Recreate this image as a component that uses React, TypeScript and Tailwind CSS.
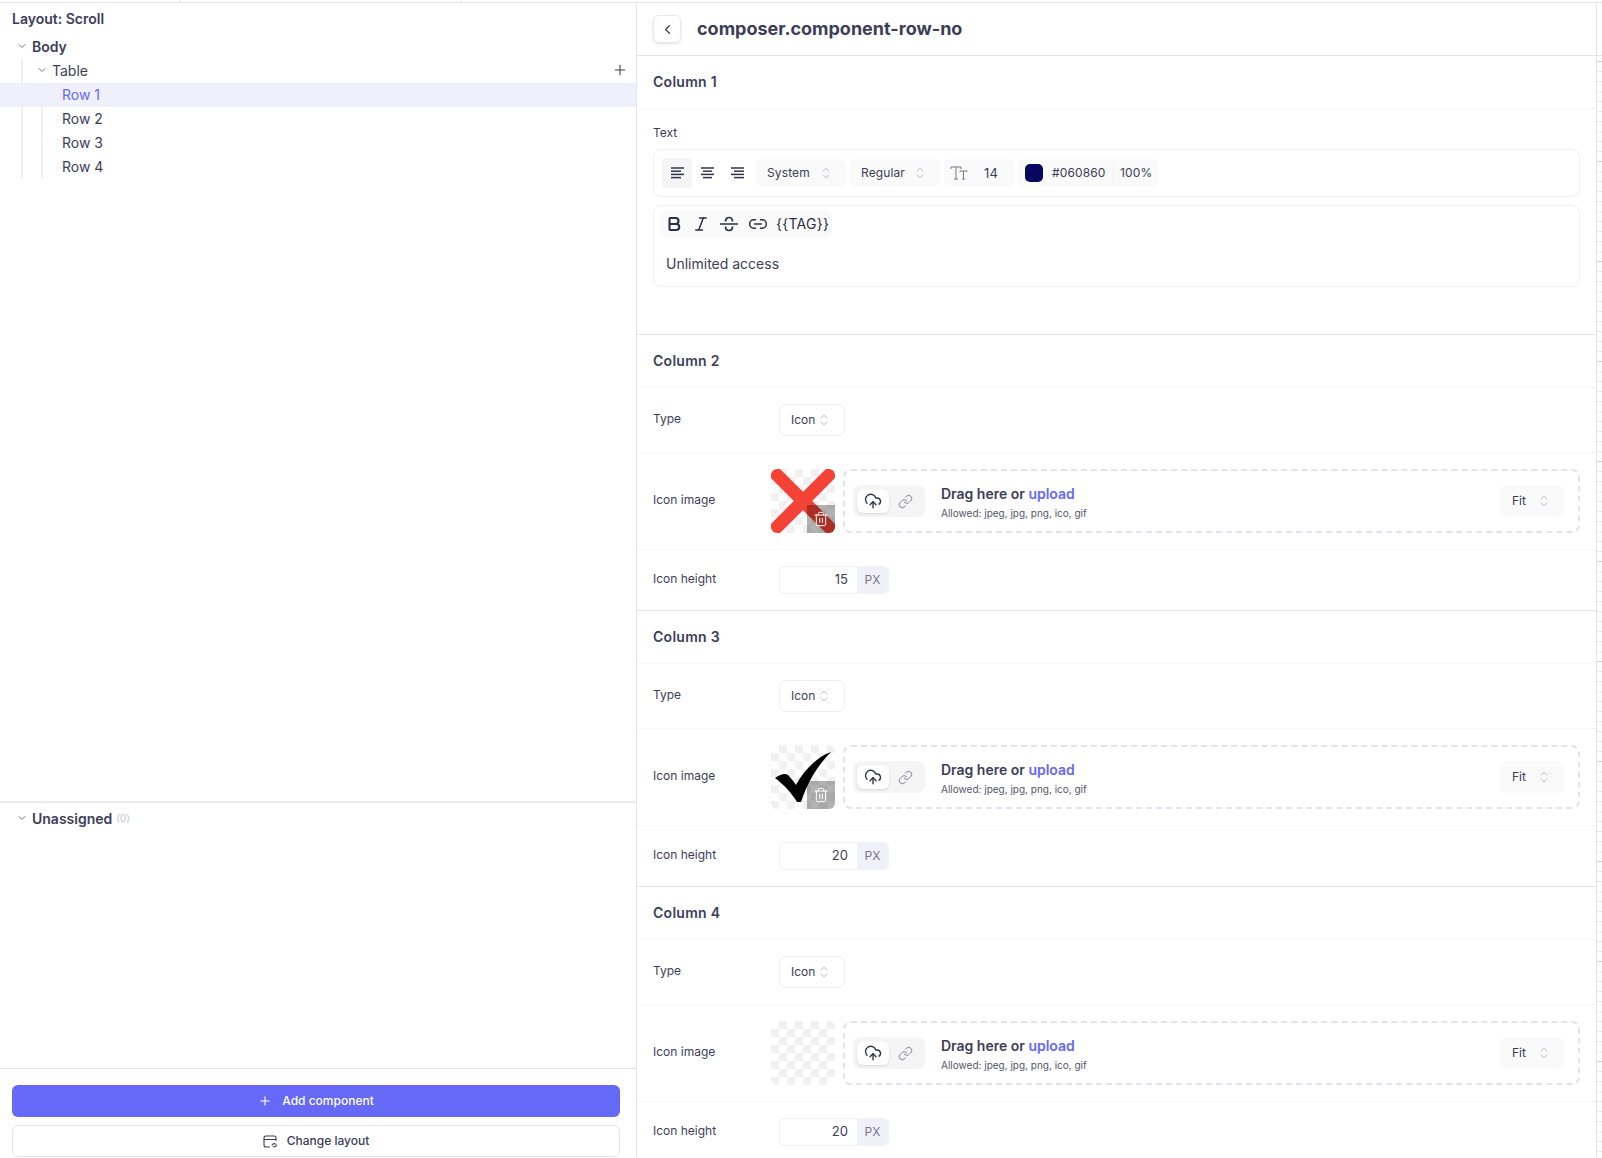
import React from "react";
import { ChevronDown, ChevronLeft, Plus, Bold, Italic, Link2, CloudUpload, Link, Trash2 } from "lucide-react";

const AlignIcon = ({ kind }: { kind: "l" | "c" | "r" }) => {
  const rows = kind === "l" ? [[1, 14], [1, 11], [1, 14], [1, 11]] : kind === "c" ? [[1, 14], [3, 12], [1, 14], [3, 12]] : [[1, 14], [4, 14], [1, 14], [4, 14]];
  return (
    <svg width="15" height="12" viewBox="0 0 15 12" stroke="#33334a" strokeWidth="1.5">
      {rows.map((r, i) => (
        <line key={i} x1={r[0]} x2={r[1]} y1={1 + i * 3.2} y2={1 + i * 3.2} />
      ))}
    </svg>
  );
};

const Updown = ({ className = "" }: { className?: string }) => (
  <svg width="8" height="12" viewBox="0 0 8 12" fill="none" stroke="#b9b9c6" strokeWidth="1" className={className}>
    <path d="M1 4.2 4 1.2l3 3M1 7.8l3 3 3-3" />
  </svg>
);

function Section({ title, height, file }: { title: string; height: string; file: "x" | "check" | "none" }) {
  return (
    <section className="border-t border-[#e5e5e8]">
      <div className="h-[53px] flex items-center px-4 border-b border-[#f7f7f9]">
        <h3 className="mb-[2px] text-[14px] tracking-[0.02em] font-semibold text-[#3d3d58]">{title}</h3>
      </div>
      <div className="h-[65px] flex items-center px-4 border-b border-[#f7f7f9]">
        <span className="mb-[2px] w-[126px] text-[12px] text-[#3d3d58]">Type</span>
        <div className="w-[66px] h-[32px] rounded-md border border-[#eeeef6] flex items-center pl-[11px] gap-[5px] text-[12px] text-[#3d3d58]">
          Icon <Updown />
        </div>
      </div>
      <div className="h-[97px] flex items-center pl-4 pr-4 border-b border-[#f7f7f9]">
        <span className="mb-[2px] w-[118px] text-[12px] text-[#3d3d58]">Icon image</span>
        <div className="relative w-[64px] h-[64px] rounded-md overflow-hidden bg-[repeating-conic-gradient(#f1f1f1_0_25%,#ffffff_0_50%)] bg-[length:16px_16px]">
          {file === "x" && (
            <svg viewBox="0 0 64 64" className="absolute inset-0 w-full h-full">
              <path d="M6 6 58 58M58 6 6 58" stroke="#f44336" strokeWidth="13" strokeLinecap="round" />
            </svg>
          )}
          {file === "check" && (
            <svg viewBox="0 0 64 64" className="absolute inset-0 w-full h-full">
              <path d="M4 33 C10 29 14 28 17 30 C20 33 23 37 25 40 C33 25 46 12 60 7 C47 20 37 36 30 57 L26 57 C20 47 12 39 4 33Z" fill="#000" />
            </svg>
          )}
          {file !== "none" && (
            <div className="absolute right-0 bottom-0 w-[28px] h-[28px] bg-black/30 flex items-center justify-center">
              <Trash2 size={16} strokeWidth={1.5} className="text-white" />
            </div>
          )}
        </div>
        <div className="ml-2 flex-1 h-[64px] rounded-lg border-2 border-dashed border-[#e3e3f0] flex items-center pl-[8px] pr-[14px]">
          <div className="w-[72px] h-[32px] rounded-lg bg-[#f5f5f5] flex items-center pl-1">
            <div className="w-[32px] h-[24px] rounded-md bg-white shadow-sm flex items-center justify-center">
              <CloudUpload size={18} strokeWidth={1.8} className="text-[#2f2f45]" />
            </div>
            <Link size={15} strokeWidth={1.5} className="ml-[9px] text-[#77778a]" />
          </div>
          <div className="ml-4 flex-1 pt-1">
            <div className="text-[14px] leading-[20px] font-semibold text-[#3d3d58]">
              Drag here or <span className="text-[#6569f5]">upload</span>
            </div>
            <div className="text-[10px] leading-[18px] text-[#55556a]">Allowed: jpeg, jpg, png, ico, gif</div>
          </div>
          <div className="w-[64px] h-[32px] rounded-md bg-[#fafafa] flex items-center pl-3 gap-[14px] text-[12px] text-[#3d3d58]">
            Fit <Updown />
          </div>
        </div>
      </div>
      <div className="h-[60px] flex items-center px-4">
        <span className="mb-[2px] w-[126px] text-[12px] text-[#3d3d58]">Icon height</span>
        <div className="flex h-[28px] w-[110px] rounded-md border border-[#f0f0f6] overflow-hidden">
          <div className="flex-1 flex items-center justify-end pr-[9px] text-[13px] text-[#3d3d58]">{height}</div>
          <div className="w-[31px] bg-[#f0f0f9] flex items-center justify-center text-[12px] text-[#77778c]">PX</div>
        </div>
      </div>
    </section>
  );
}

const Row = ({ label, active }: { label: string; active?: boolean }) => (
  <div className={`h-[24px] flex items-center pl-[62px] pb-[2px] text-[14px] ${active ? "bg-[#f0f0fd] text-[#6569f5]" : "text-[#3d3d58]"}`}>{label}</div>
);

const Pill = ({ className, children }: { className: string; children: React.ReactNode }) => (
  <div className={`h-[28px] rounded-md bg-[#fafafa] flex items-center text-[12px] tracking-[0.01em] text-[#3d3d58] ${className}`}>{children}</div>
);

export default function App() {
  return (
    <div className="h-[1158px] w-[1602px] overflow-hidden bg-white flex flex-col font-['Inter',sans-serif]">
      <div className="h-[3px] border-b border-[#e5e5e5] flex shrink-0">
        <div className="w-[181px] border-r border-[#e5e5e5]" />
        <div className="w-[281px] border-r border-[#e5e5e5]" />
      </div>
      <div className="flex flex-1 min-h-0">
        <aside className="w-[637px] border-r border-[#e5e5e8] flex flex-col">
          <div className="h-[32px] flex items-center pl-3 pb-[2px] text-[14px] font-semibold text-[#3d3d58]">Layout: Scroll</div>
          <div className="h-[766px] relative">
            <div className="h-[24px] flex items-center pl-4 pb-[2px] gap-[4px] text-[14px] font-semibold text-[#3d3d58]">
              <ChevronDown size={12} className="text-[#77778a]" />
              Body
            </div>
            <div className="h-[24px] flex items-center pl-[36px] pr-[8px] pb-[2px] gap-[4px] text-[14px] text-[#3d3d58]">
              <ChevronDown size={12} className="text-[#77778a]" />
              <span className="flex-1">Table</span>
              <Plus size={16} strokeWidth={1.6} className="text-[#3d3d58]" />
            </div>
            <Row label="Row 1" active />
            <Row label="Row 2" />
            <Row label="Row 3" />
            <Row label="Row 4" />
            <div className="absolute left-[21px] top-[24px] w-[2px] h-[120px] bg-[#f0f0f3]" />
            <div className="absolute left-[41px] top-[48px] w-[2px] h-[96px] bg-[#f0f0f3]" />
          </div>
          <div className="flex-1 border-t-2 border-[#ececef]">
            <div className="h-[30px] flex items-center pl-4 gap-[4px] text-[14px] font-semibold text-[#3d3d58]">
              <ChevronDown size={12} className="text-[#77778a]" />
              Unassigned <span className="text-[10px] font-normal text-[#c3c3d2]">(0)</span>
            </div>
          </div>
          <div className="h-[90px] border-t border-[#e5e5e8] pl-3 pr-4 pt-4 flex flex-col gap-2">
            <button className="h-[32px] shrink-0 rounded-md bg-[#6569f5] text-white text-[12px] font-medium flex items-center justify-center gap-[10px]">
              <Plus size={14} /> Add component
            </button>
            <button className="h-[32px] shrink-0 rounded-md border border-[#e5e5e8] text-[#3d3d58] text-[12px] font-medium flex items-center justify-center gap-[9px]">
              <svg width="15" height="13" viewBox="0 0 15 13" fill="none" stroke="#3d3d58" strokeWidth="1.1">
                <path d="M7 12H3a2 2 0 0 1-2-2V3a2 2 0 0 1 2-2h8a2 2 0 0 1 2 2v3M1 4.5h12" />
                <path d="M9 10.5a2 2 0 0 1 3.6-1M13.5 9.5a2 2 0 0 1-3.5 1.5" />
              </svg>
              Change layout
            </button>
          </div>
        </aside>
        <main className="flex-1 min-w-0 flex flex-col">
          <header className="h-[53px] shrink-0 flex items-center pl-4 gap-4 border-b border-[#e5e5e8]">
            <button className="w-[28px] h-[28px] rounded-md border border-[#e8e8ee] shadow-sm flex items-center justify-center">
              <ChevronLeft size={15} className="text-[#3d3d58]" />
            </button>
            <h1 className="mb-[2px] text-[18px] font-bold text-[#3d3d58]">composer.component-row-no</h1>
          </header>
          <section className="h-[278px] shrink-0">
            <div className="h-[53px] flex items-center px-4 border-b border-[#f7f7f9]">
              <h3 className="mb-[2px] text-[14px] tracking-[0.02em] font-semibold text-[#3d3d58]">Column 1</h3>
            </div>
            <div className="pl-4 pr-4">
              <div className="h-[40px] pt-[7px] flex items-center text-[12px] text-[#3d3d58]">Text</div>
              <div className="h-[48px] rounded-lg border border-[#f0f0f6] flex items-center pl-[8px] gap-1">
                <div className="flex">
                  <div className="w-[30px] h-[30px] bg-[#f5f5f5] rounded flex items-center justify-center"><AlignIcon kind="l" /></div>
                  <div className="w-[30px] h-[30px] flex items-center justify-center"><AlignIcon kind="c" /></div>
                  <div className="w-[30px] h-[30px] flex items-center justify-center"><AlignIcon kind="r" /></div>
                </div>
                <Pill className="w-[90px] pl-[11px] gap-[12px]">System <Updown /></Pill>
                <Pill className="w-[90px] pl-[11px] gap-[11px]">Regular <Updown /></Pill>
                <Pill className="w-[70px] pl-[6px] gap-[16px]">
                  <svg width="18" height="14" viewBox="0 0 18 14" fill="none" stroke="#77778a" strokeWidth="1">
                    <path d="M1 3V1h10v2M6 1v12M4 13h4M10 6V5h7v1M13.5 5v8M12 13h3" />
                  </svg>
                  <span className="text-[13px] mt-px">14</span>
                </Pill>
                <Pill className="w-[140px] pl-[7px]">
                  <span className="w-[18px] h-[18px] rounded-[5px] bg-[#060860]" />
                  <span className="ml-[9px] w-[61px]">#060860</span>
                  <span className="w-px h-[22px] bg-[#f0f0f0]" />
                  <span className="ml-[6px]">100%</span>
                </Pill>
              </div>
              <div className="mt-2 h-[82px] rounded-lg border border-[#f0f0f6] px-[6px] pt-1">
                <div className="w-[172px] h-[28px] rounded-md bg-[#fafafa] flex items-center pl-[5px] gap-[9px] text-[#2f2f45]">
                  <Bold size={18} strokeWidth={2.8} />
                  <Italic size={18} strokeWidth={2} />
                  <svg width="20" height="20" viewBox="0 0 20 20" fill="none" stroke="currentColor" strokeWidth="1.7">
                    <path d="M1 10h18M6.5 7.5C6.5 5 8 3.5 10 3.5s3.5 1.5 3.5 4M6.5 12.5c0 2.5 1.5 4 3.5 4s3.5-1.5 3.5-4" />
                  </svg>
                  <Link2 size={20} strokeWidth={1.8} />
                  <span className="text-[14px] tracking-[0.02em] mb-px -ml-[1px]">{"{{TAG}}"}</span>
                </div>
                <div className="pl-[6px] mt-[16px] text-[14px] leading-[20px] text-[#3d3d58]">Unlimited access</div>
              </div>
            </div>
          </section>
          <Section title="Column 2" height="15" file="x" />
          <Section title="Column 3" height="20" file="check" />
          <Section title="Column 4" height="20" file="none" />
        </main>
        <div className="w-[6px] shrink-0 border-l border-[#e5e5e5] overflow-hidden">
          <div className="h-[53px] border-b border-[#e5e5e8]" />
          <div className="h-[5px]" />
          {Array.from({ length: 110 }, (_, i) => (
            <div key={i} className={`h-[10px] border-t ${i % 10 === 0 ? "border-[#cfcfcf]" : "border-[#e8e8e8]"}`} />
          ))}
        </div>
      </div>
    </div>
  );
}
